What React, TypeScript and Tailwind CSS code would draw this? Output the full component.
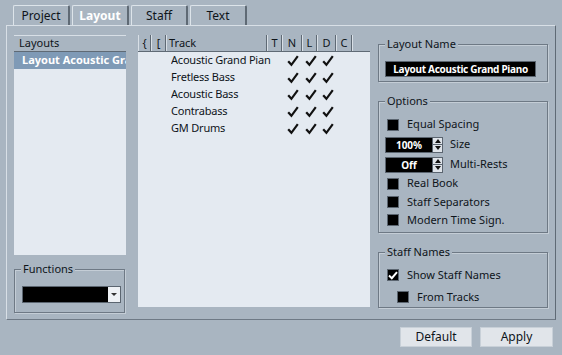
import type { ReactNode } from 'react'

const BG = 'bg-[#a9b5c1]'

function Tick({ color = '#111' }: { color?: string }) {
  return (
    <svg width="12" height="12" viewBox="0 0 12 12">
      <path d="M1.2 6.2 L4.4 9.8 L10.8 1.2" fill="none" stroke={color} strokeWidth="2.2" />
    </svg>
  )
}

function Box({ checked = false }: { checked?: boolean }) {
  return (
    <div className="w-[12px] h-[12px] bg-black border border-[#5b6570] flex items-center justify-center shrink-0">
      {checked && (
        <svg width="10" height="9" viewBox="0 0 10 9">
          <path d="M1 4.5 L3.8 7.2 L9 1.2" fill="none" stroke="#fff" strokeWidth="2" />
        </svg>
      )}
    </div>
  )
}

function Spin({ value }: { value: string }) {
  return (
    <div className="flex h-[16px] w-[58px] shrink-0">
      <div className="flex-1 bg-black border border-[#5b6570] text-white font-bold text-[10px] flex items-center justify-center leading-none">
        {value}
      </div>
      <div className="w-[10px] flex flex-col border border-l-0 border-[#5b6570] bg-[#dfe4ea]">
        <div className="flex-1 flex items-center justify-center border-b border-[#5b6570]">
          <svg width="6" height="4" viewBox="0 0 6 4"><path d="M0 4 L3 0 L6 4 Z" fill="#111" /></svg>
        </div>
        <div className="flex-1 flex items-center justify-center">
          <svg width="6" height="4" viewBox="0 0 6 4"><path d="M0 0 L3 4 L6 0 Z" fill="#111" /></svg>
        </div>
      </div>
    </div>
  )
}

function Group({ label, className, children }: { label: string; className: string; children?: ReactNode }) {
  return (
    <div className={`relative border border-[#6e7985] shadow-[inset_1px_1px_0_#c4cdd6,1px_1px_0_#c4cdd6] ${className}`}>
      <span className={`absolute -top-[9px] left-[6px] px-[2px] leading-[16px] ${BG}`}>{label}</span>
      {children}
    </div>
  )
}

const tracks = ['Acoustic Grand Pian', 'Fretless Bass', 'Acoustic Bass', 'Contrabass', 'GM Drums']

const cols = [
  { label: '{', w: 'w-[13px]' },
  { label: '[', w: 'w-[15px]' },
  { label: 'Track', w: 'w-[101px]' },
  { label: 'T', w: 'w-[15px]' },
  { label: 'N', w: 'w-[20px]' },
  { label: 'L', w: 'w-[15px]' },
  { label: 'D', w: 'w-[19px]' },
  { label: 'C', w: 'w-[16px]' },
]

export default function App() {
  return (
    <div className={`w-[562px] h-[355px] ${BG} text-[11px] text-[#0e141a] font-['Noto_Sans',sans-serif] overflow-hidden`}>
      {/* Tabs */}
      <div className="flex gap-[2px] pl-[13px] pt-[5px]">
        {['Project', 'Layout', 'Staff', 'Text'].map((t) => (
          <div
            key={t}
            className={`w-[57px] h-[20px] flex items-center justify-center rounded-t-[2px] border-t border-l border-[#dde4ea] border-r-2 border-r-[#5f6a75] text-[12px] ${
              t === 'Layout' ? 'font-bold text-white' : ''
            }`}
          >
            {t}
          </div>
        ))}
      </div>

      {/* Panel */}
      <div className="ml-[6px] w-[550px] h-[295px] border-t border-l border-[#d8dfe6] border-r border-b border-r-[#5f6a75] border-b-[#6e7985] flex pl-[7px] pt-[9px]">
        {/* Left column */}
        <div className="w-[112px] flex flex-col">
          <div className="h-[220px] bg-[#e4eaf1] flex flex-col overflow-hidden">
            <div className={`h-[17px] ${BG} border-t border-[#d8dfe6] border-b border-b-[#5f6a75] pl-[5px] flex items-center`}>Layouts</div>
            <div className="h-[17px] bg-[#7f9ab6] text-white font-bold pl-[8px] flex items-center whitespace-nowrap overflow-hidden">
              Layout Acoustic Grand Piano
            </div>
          </div>
          <Group label="Functions" className="mt-[14px] w-[111px] h-[44px]">
            <div className="ml-[7px] mt-[16px] w-[99px] h-[17px] bg-black border border-[#5b6570] flex justify-end">
              <div className="w-[12px] h-full bg-[#eef1f5] flex items-center justify-center">
                <svg width="6" height="4" viewBox="0 0 6 4"><path d="M0 0 L3 3 L6 0 Z" fill="#333" /></svg>
              </div>
            </div>
          </Group>
        </div>

        {/* Track table */}
        <div className="ml-[12px] w-[232px] h-[272px] bg-[#e4eaf1] flex flex-col">
          <div className={`h-[17px] ${BG} flex border-b border-[#5f6a75]`}>
            {cols.map((c) => (
              <div
                key={c.label}
                className={`${c.w} h-full border-l border-[#d8dfe6] border-r border-r-[#5f6a75] flex items-center ${
                  c.label === 'Track' ? 'pl-[2px]' : 'justify-center'
                }`}
              >
                {c.label}
              </div>
            ))}
            <div className="flex-1 border-l border-[#d8dfe6]" />
          </div>
          {tracks.map((t) => (
            <div key={t} className="h-[17px] flex items-center">
              <div className="w-[33px]" />
              <div className="w-[112px] whitespace-nowrap overflow-hidden tracking-[-0.2px]">{t}</div>
              <div className="w-[20px] flex justify-center"><Tick /></div>
              <div className="w-[15px] flex justify-center"><Tick /></div>
              <div className="w-[19px] flex justify-center"><Tick /></div>
            </div>
          ))}
        </div>

        {/* Right column */}
        <div className="ml-[8px] w-[170px] flex flex-col">
          <Group label="Layout Name" className="mt-[9px] h-[38px]">
            <div className="ml-[6px] mt-[16px] w-[151px] h-[16px] bg-black border border-[#5b6570] text-white font-bold text-[10px] tracking-[-0.3px] flex items-center justify-center whitespace-nowrap">
              Layout Acoustic Grand Piano
            </div>
          </Group>

          <Group label="Options" className="mt-[19px] h-[132px] pt-[13px] pl-[8px]">
            <div className="h-[19px] flex items-center gap-[8px]"><Box /><span>Equal Spacing</span></div>
            <div className="h-[21px] -ml-[2px] flex items-center gap-[7px]"><Spin value="100%" /><span>Size</span></div>
            <div className="h-[19px] -ml-[2px] flex items-center gap-[7px]"><Spin value="Off" /><span>Multi-Rests</span></div>
            <div className="h-[19px] flex items-center gap-[8px]"><Box /><span>Real Book</span></div>
            <div className="h-[18px] flex items-center gap-[8px]"><Box /><span>Staff Separators</span></div>
            <div className="h-[18px] flex items-center gap-[8px]"><Box /><span>Modern Time Sign.</span></div>
          </Group>

          <Group label="Staff Names" className="mt-[19px] h-[56px] pt-[11px] pl-[8px]">
            <div className="h-[22px] flex items-center gap-[8px]"><Box checked /><span>Show Staff Names</span></div>
            <div className="h-[22px] pl-[10px] flex items-center gap-[8px]"><Box /><span>From Tracks</span></div>
          </Group>
        </div>
      </div>

      {/* Buttons */}
      <div className="flex justify-end gap-[8px] pr-[9px] mt-[7px]">
        <button className="w-[72px] h-[20px] bg-[#e1e5ea] border border-[#c8d0d8] text-[12px]">Default</button>
        <button className="w-[73px] h-[20px] bg-[#e1e5ea] border border-[#c8d0d8] text-[12px]">Apply</button>
      </div>
    </div>
  )
}
